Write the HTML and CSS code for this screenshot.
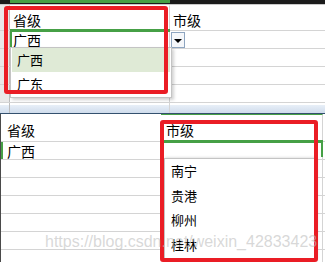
FILE: index.html
```html
<!DOCTYPE html>
<html lang="zh-CN">
<head>
    <meta charset="UTF-8">
    <title>省市二级联动下拉</title>
    <link rel="stylesheet" href="styles.css">
</head>
<body>
    <div class="pane pane-top">
        <div class="bar"><span class="bar-sel"></span></div>
        <div class="row row-head">
            <div class="cell gut"></div>
            <div class="cell col-a">省级</div>
            <div class="cell col-b">市级</div>
        </div>
        <div class="row">
            <div class="cell gut"></div>
            <div class="cell col-a active">广西</div>
            <div class="cell col-b no-pad"><span class="drop-btn"><i class="tri"></i></span></div>
        </div>
        <div class="row"><div class="cell gut"></div><div class="cell col-a"></div><div class="cell col-b"></div></div>
        <div class="row"><div class="cell gut"></div><div class="cell col-a"></div><div class="cell col-b"></div></div>
        <div class="row"><div class="cell gut"></div><div class="cell col-a"></div><div class="cell col-b"></div></div>
        <div class="row row-tail"><div class="cell gut"></div><div class="cell col-a"></div><div class="cell col-b"></div></div>

        <ul class="list list-top">
            <li class="picked">广西</li>
            <li>广东</li>
        </ul>
        <div class="mark mark-top"></div>
    </div>

    <div class="divider"></div>

    <div class="pane pane-bottom">
        <div class="row row-head">
            <div class="cell b-a">省级</div>
            <div class="cell b-b col-on">市级</div>
            <div class="cell b-c"></div>
        </div>
        <div class="row">
            <div class="cell b-a edge">广西</div>
            <div class="cell b-b active-b"></div>
            <div class="cell b-c"></div>
        </div>
        <div class="row"><div class="cell b-a"></div><div class="cell b-b"></div><div class="cell b-c"></div></div>
        <div class="row"><div class="cell b-a"></div><div class="cell b-b"></div><div class="cell b-c"></div></div>
        <div class="row"><div class="cell b-a"></div><div class="cell b-b"></div><div class="cell b-c"></div></div>
        <div class="row"><div class="cell b-a"></div><div class="cell b-b"></div><div class="cell b-c"></div></div>
        <div class="row"><div class="cell b-a"></div><div class="cell b-b"></div><div class="cell b-c"></div></div>
        <div class="row row-last"><div class="cell b-a"></div><div class="cell b-b"></div><div class="cell b-c"></div></div>

        <ul class="list list-bottom">
            <li>南宁</li>
            <li>贵港</li>
            <li>柳州</li>
            <li>桂林</li>
        </ul>
        <div class="mark mark-bottom"></div>
        <div class="watermark">https://blog.csdn.net/weixin_42833423</div>
    </div>
</body>
</html>
```

FILE: styles.css
```css
* {
    margin: 0;
    padding: 0;
    box-sizing: border-box;
}

body {
    width: 325px;
    height: 262px;
    overflow: hidden;
    background-color: #fff;
    color: #000;
    font-family: "Noto Sans CJK SC", sans-serif;
    font-size: 14px;
}

.pane {
    position: relative;
    overflow: hidden;
}

.pane-top {
    height: 113px;
}

.pane-bottom {
    height: 148px;
    border-left: 1px solid #4a4a4a;
}

.divider {
    height: 1px;
    background-color: #34506e;
}

/* sheet window top edge */
.bar {
    display: flex;
    height: 5px;
    background-color: #1b1b1b;
    border-bottom: 1px solid #c9c9c9;
}

.bar-sel {
    width: 160px;
    height: 3px;
    margin-left: 10px;
    background-color: #46a046;
}

.row {
    display: flex;
    height: 18px;
    border-bottom: 1px solid #d4d4d4;
}

.row-head {
    height: 26px;
}

.pane-bottom .row-head {
    height: 28px;
}

.row-tail {
    height: 10px;
    border-bottom: none;
    background: linear-gradient(to bottom, #fff 0, #fff 2px, #e8eff8 2px, #cfdcec 100%);
}

.row-last {
    border-bottom: none;
}

.cell {
    display: flex;
    align-items: center;
    position: relative;
    line-height: 16px;
}

.row-head .cell {
    padding-top: 3px;
}

.gut {
    width: 10px;
    background-color: #e9e9e9;
    border-right: 1px solid #bdbdbd;
}

.row-tail .gut {
    background-color: transparent;
}

.col-a {
    width: 160px;
    padding-left: 3px;
    border-right: 1px solid #d4d4d4;
}

.col-b {
    flex: 1;
    padding-left: 3px;
}

.no-pad {
    padding-left: 1px;
    align-items: flex-start;
}

.active::before {
    content: "";
    position: absolute;
    top: -2px;
    left: 0;
    right: -1px;
    height: 3px;
    background-color: #46a046;
}

.active::after {
    content: "";
    position: absolute;
    top: 0;
    bottom: 0;
    left: 0;
    width: 2px;
    background-color: #46a046;
}

.drop-btn {
    display: flex;
    align-items: center;
    justify-content: center;
    width: 14px;
    height: 16px;
    margin-top: 1px;
    background-color: #f5f7fa;
    border: 1px solid #8ea5c0;
}

.tri {
    width: 0;
    height: 0;
    margin-top: 2px;
    border-left: 4px solid transparent;
    border-right: 4px solid transparent;
    border-top: 4px solid #000;
}

/* bottom sheet columns */
.b-a {
    width: 160px;
    padding-left: 6px;
}

.b-b {
    width: 162px;
    padding-left: 5px;
    border-right: 1px solid #d4d4d4;
}

.b-c {
    flex: 1;
}

.row-head .cell {
    border-top: 1px solid transparent;
}

.row-head .col-on {
    border-top-color: #46a046;
}

.edge::before {
    content: "";
    position: absolute;
    top: 0;
    bottom: 0;
    left: 0;
    width: 2px;
    background-color: #46a046;
}

.active-b::before {
    content: "";
    position: absolute;
    top: -2px;
    left: 1px;
    right: -1px;
    height: 3px;
    background-color: #46a046;
}

.active-b::after {
    content: "";
    position: absolute;
    top: 0;
    bottom: 2px;
    right: -1px;
    width: 2px;
    background-color: #46a046;
}

/* data validation lists */
.list {
    position: absolute;
    list-style: none;
    background-color: #fff;
    border: 1px solid #c4c4c4;
    box-shadow: 2px 2px 3px rgba(0, 0, 0, 0.18);
    font-size: 13px;
}

.list-top {
    left: 10px;
    top: 47px;
    width: 162px;
    height: 51px;
}

.list-top li {
    height: 24px;
    line-height: 24px;
    margin: 0 1px;
    padding-left: 5px;
}

.list-top .picked {
    background-color: #dfead6;
}

.list-bottom {
    left: 163px;
    top: 44px;
    width: 152px;
    height: 102px;
    box-shadow: 1px 0 3px rgba(0, 0, 0, 0.2);
}

.list-bottom li {
    height: 24.5px;
    line-height: 24px;
    padding-left: 6px;
}

/* red highlight boxes */
.mark {
    position: absolute;
    border: 4px solid #ea1d25;
    border-radius: 3px;
}

.mark-top {
    left: 4px;
    top: 6px;
    width: 164px;
    height: 88px;
}

.mark-bottom {
    left: 159px;
    top: 6px;
    width: 158px;
    height: 142px;
}

.watermark {
    position: absolute;
    left: 44px;
    top: 119px;
    font-family: "Liberation Sans", Arial, sans-serif;
    font-size: 16px;
    line-height: 18px;
    color: rgba(190, 190, 190, 0.6);
    white-space: nowrap;
}
```
